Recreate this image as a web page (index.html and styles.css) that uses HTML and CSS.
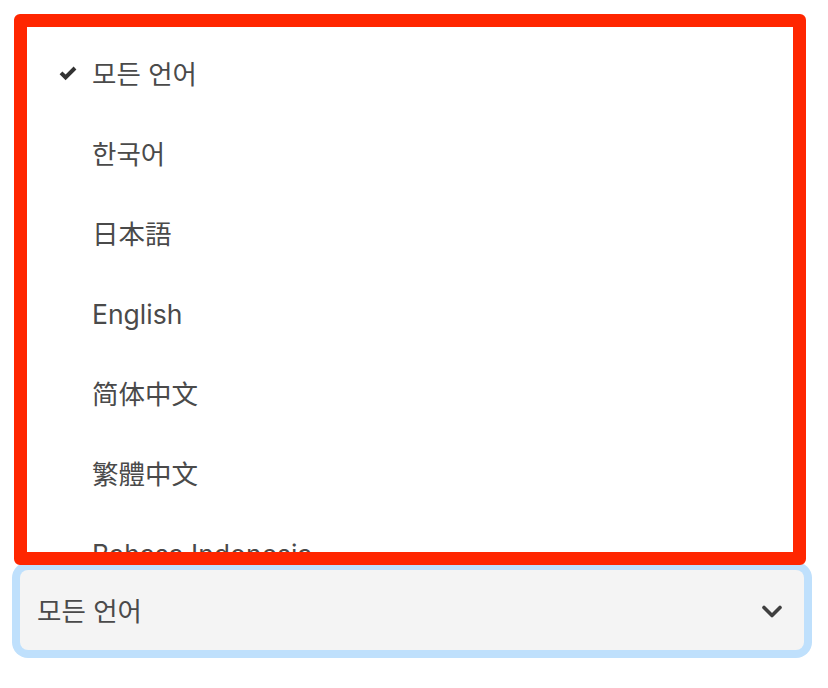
FILE: index.html
```html
<!DOCTYPE html>
<html lang="ko">
<head>
<meta charset="utf-8">
<title>언어 선택</title>
<link rel="stylesheet" href="styles.css">
</head>
<body>
<div class="picker">
  <ul class="menu">
    <li class="option selected">
      <svg class="check" viewBox="0 0 18 15" aria-hidden="true"><path d="M0.6 8.2 L3.4 5.4 L6.6 8.6 L14.6 0.6 L17.4 3.4 L6.6 14.2 Z"/></svg>
      <span>모든 언어</span>
    </li>
    <li class="option"><span>한국어</span></li>
    <li class="option"><span lang="ja">日本語</span></li>
    <li class="option"><span lang="en">English</span></li>
    <li class="option"><span lang="zh-CN">简体中文</span></li>
    <li class="option"><span lang="zh-TW">繁體中文</span></li>
    <li class="option"><span lang="id">Bahasa Indonesia</span></li>
  </ul>
  <div class="select">
    <span class="select-value">모든 언어</span>
    <svg class="chevron" viewBox="0 0 20 13" aria-hidden="true"><path d="M2 2.5 L10 10.5 L18 2.5"/></svg>
  </div>
</div>
</body>
</html>
```
FILE: styles.css
```css
html, body {
  margin: 0;
  padding: 0;
  background: #ffffff;
}

body {
  font-family: Inter, "Noto Sans CJK KR", "Noto Sans", sans-serif;
  color: #4a4a4a;
  min-height: 688px;
}

.picker {
  padding: 14px 0 30px 14px;
  width: 792px;
}

.menu {
  position: relative;
  z-index: 1;
  box-sizing: border-box;
  list-style: none;
  margin: 0;
  padding: 7px 0 0;
  width: 792px;
  height: 551px;
  border: 13px solid #ff2600;
  border-radius: 6px;
  background: #ffffff;
  overflow: hidden;
}

.option {
  height: 80px;
  display: flex;
  align-items: center;
  padding-left: 65px;
  font-size: 26.5px;
  line-height: 1;
  position: relative;
}

.option span {
  display: block;
}

/* selected-item tick, left of the label */
.check {
  position: absolute;
  left: 32px;
  top: 32px;
  width: 18px;
  height: 15px;
  fill: #333333;
}

.select {
  box-sizing: border-box;
  margin: 5px 0 0 6px;
  width: 784px;
  height: 80px;
  display: flex;
  align-items: center;
  justify-content: space-between;
  padding: 2px 22px 0 17px;
  background: #f4f4f4;
  border-radius: 8px;
  box-shadow: 0 0 0 8px #bfe0fc;
}

.select-value {
  font-size: 26.5px;
  line-height: 1;
}

.chevron {
  width: 20px;
  height: 13px;
  fill: none;
  stroke: #3f3f3f;
  stroke-width: 3.6;
  stroke-linecap: round;
  stroke-linejoin: round;
}
```
